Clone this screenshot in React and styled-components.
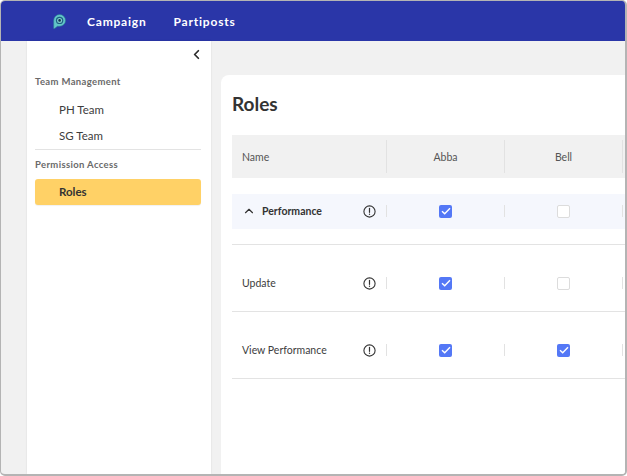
import styled, { createGlobalStyle } from "styled-components"
import { ChevronLeft, ChevronUp } from "lucide-react"

const GlobalStyle = createGlobalStyle`
    html, body {
        margin: 0;
        padding: 0;
        background: #fff;
    }
    * {
        box-sizing: border-box;
    }
`

const Logo = () => (
    <svg width="13" height="15" viewBox="0 0 13 15">
        <path d="M0.7 6.4a5.9 5.9 0 1 1 5.9 5.9H4.4L1.6 14.6H0.7z" fill="#62c6c8" stroke="#2a7f96" strokeWidth="0.6" />
        <circle cx="6.6" cy="6.4" r="3.7" fill="#1f5f86" />
        <circle cx="6.6" cy="6.4" r="2.5" fill="#7fd3d0" />
        <circle cx="6.6" cy="6.4" r="1.3" fill="#16324f" />
    </svg>
)

const InfoIcon = () => (
    <svg width="13" height="13" viewBox="0 0 13 13" fill="none">
        <circle cx="6.5" cy="6.5" r="5.6" stroke="#333" strokeWidth="1.1" />
        <path d="M6.5 3.4v3.9" stroke="#333" strokeWidth="1.2" strokeLinecap="round" />
        <circle cx="6.5" cy="9.3" r="0.7" fill="#333" />
    </svg>
)

const Check = ({ checked }) => (
    <CheckBox $checked={checked}>
        {checked && (
            <svg width="10" height="8" viewBox="0 0 10 8" fill="none">
                <path d="M1 4.2 3.7 6.8 9 1.2" stroke="#fff" strokeWidth="1.4" />
            </svg>
        )}
    </CheckBox>
)

const rows = [
    { name: "Update", abba: true, bell: false },
    { name: "View Performance", abba: true, bell: true },
]

export default function App() {
    return (
        <Frame>
            <GlobalStyle />
            <Header>
                <LogoSlot><Logo /></LogoSlot>
                <NavLink>Campaign</NavLink>
                <NavLink>Partiposts</NavLink>
            </Header>
            <Body>
                <Sidebar>
                    <CollapseRow><ChevronLeft size={15} strokeWidth={2.8} color="#2b2b2b" /></CollapseRow>
                    <SectionTitle>Team Management</SectionTitle>
                    <MenuItem>PH Team</MenuItem>
                    <MenuItem>SG Team</MenuItem>
                    <Divider />
                    <SectionTitle $second>Permission Access</SectionTitle>
                    <ActiveItem>Roles</ActiveItem>
                </Sidebar>
                <Main>
                    <Card>
                        <Title>Roles</Title>
                        <Table>
                            <HeadRow>
                                <NameHead>Name</NameHead>
                                <HeadCell>Abba</HeadCell>
                                <HeadCell>Bell</HeadCell>
                                <HeadCell />
                            </HeadRow>
                            <GroupRow>
                                <NameCell>
                                    <GroupName>
                                        <ChevronUp size={14} strokeWidth={2} color="#333" />
                                        Performance
                                    </GroupName>
                                    <InfoIcon />
                                </NameCell>
                                <CheckCell><Check checked /></CheckCell>
                                <CheckCell><Check /></CheckCell>
                                <CheckCell />
                            </GroupRow>
                            {rows.map((row) => (
                                <DataRow key={row.name}>
                                    <NameCell>
                                        <span>{row.name}</span>
                                        <InfoIcon />
                                    </NameCell>
                                    <CheckCell><Check checked={row.abba} /></CheckCell>
                                    <CheckCell><Check checked={row.bell} /></CheckCell>
                                    <CheckCell />
                                </DataRow>
                            ))}
                        </Table>
                    </Card>
                </Main>
            </Body>
        </Frame>
    )
}

const Frame = styled.div`
    width: 627px;
    height: 476px;
    display: flex;
    flex-direction: column;
    overflow: hidden;
    border: solid #b4b4b4;
    border-width: 1px 2px 2px 1px;
    border-radius: 5px;
    background: #f1f1f1;
    font-family: "Lato", "Liberation Sans", sans-serif;
    color: #333;
`

const Header = styled.header`
    height: 40px;
    flex: none;
    display: flex;
    align-items: center;
    background: #2a36a8;
    padding-left: 52px;
`

const LogoSlot = styled.div`
    display: flex;
    width: 34px;
`

const NavLink = styled.a`
    color: #fff;
    font-size: 12px;
    font-weight: 700;
    letter-spacing: 0.8px;
    margin-right: 27px;
`

const Body = styled.div`
    flex: 1;
    display: flex;
    min-height: 0;
    padding-left: 26px;
`

const Sidebar = styled.aside`
    width: 184px;
    flex: none;
    background: #fff;
    padding: 0 10px 0 8px;
    box-shadow: 0 0 2px rgba(0, 0, 0, 0.1);
`

const CollapseRow = styled.div`
    height: 28px;
    padding-top: 6px;
    margin-right: -3px;
    display: flex;
    justify-content: flex-end;
`

const SectionTitle = styled.div`
    font-size: 9.5px;
    font-weight: 700;
    letter-spacing: 0.35px;
    color: #6a6a6a;
    line-height: 12px;
    margin-top: ${({ $second }) => ($second ? "9px" : "7px")};
    margin-bottom: 8px;
`

const MenuItem = styled.div`
    height: 26px;
    padding-left: 24px;
    display: flex;
    align-items: center;
    font-size: 11.5px;
    color: #3d3d3d;
`

const Divider = styled.div`
    height: 1px;
    margin-top: 1px;
    background: #e3e3e3;
`

const ActiveItem = styled(MenuItem)`
    padding-bottom: 2px;
    background: #ffd166;
    border-radius: 3px;
    font-weight: 700;
    color: #333;
    box-shadow: 0 1px 1px rgba(0, 0, 0, 0.06);
`

const Main = styled.main`
    flex: 1;
    min-width: 0;
    padding: 34px 0 0 10px;
`

const Card = styled.section`
    height: 100%;
    background: #fff;
    border-radius: 8px 0 0 0;
    padding: 15px 0 0 11px;
`

const Title = styled.h1`
    margin: 0 0 18px;
    font-size: 19px;
    line-height: 27px;
    font-weight: 700;
    color: #333;
`

const Table = styled.div`
    display: flex;
    flex-direction: column;
`

const rowColumns = `
    display: grid;
    grid-template-columns: 154px 118px 118px 1fr;
    align-items: center;
`

const HeadRow = styled.div`
    ${rowColumns}
    height: 43px;
    background: #f1f1f1;
    font-size: 10.5px;
    color: #555;
`

const NameHead = styled.div`
    padding-left: 10px;
`

const HeadCell = styled.div`
    height: 33px;
    border-left: 1px solid #e2e2e2;
    display: flex;
    align-items: center;
    justify-content: center;
`

const GroupRow = styled.div`
    ${rowColumns}
    height: 35px;
    padding-bottom: 1px;
    margin: 16px 0 15px;
    background: #f5f7fd;
    box-shadow: 0 15px 0 #fff, 0 16px 0 #e3e3e3;
    font-weight: 700;
`

const DataRow = styled.div`
    ${rowColumns}
    height: 67px;
    padding-top: 10px;
    border-top: 1px solid #e3e3e3;
    &:last-child {
        border-bottom: 1px solid #e3e3e3;
        height: 68px;
    }
`

const NameCell = styled.div`
    display: flex;
    align-items: center;
    justify-content: space-between;
    padding: 0 10px;
    font-size: 10.5px;
    color: #3d3d3d;
`

const GroupName = styled.span`
    display: flex;
    align-items: center;
    gap: 6px;
    color: #333;
`

const CheckCell = styled.div`
    height: 12px;
    border-left: 1px solid #e2e2e2;
    display: flex;
    align-items: center;
    justify-content: center;
`

const CheckBox = styled.span`
    width: 13px;
    height: 13px;
    flex: none;
    display: flex;
    align-items: center;
    justify-content: center;
    border-radius: 2px;
    background: ${({ $checked }) => ($checked ? "#5478f6" : "#fff")};
    border: ${({ $checked }) => ($checked ? "none" : "1.5px solid #dcdcdc")};
`
